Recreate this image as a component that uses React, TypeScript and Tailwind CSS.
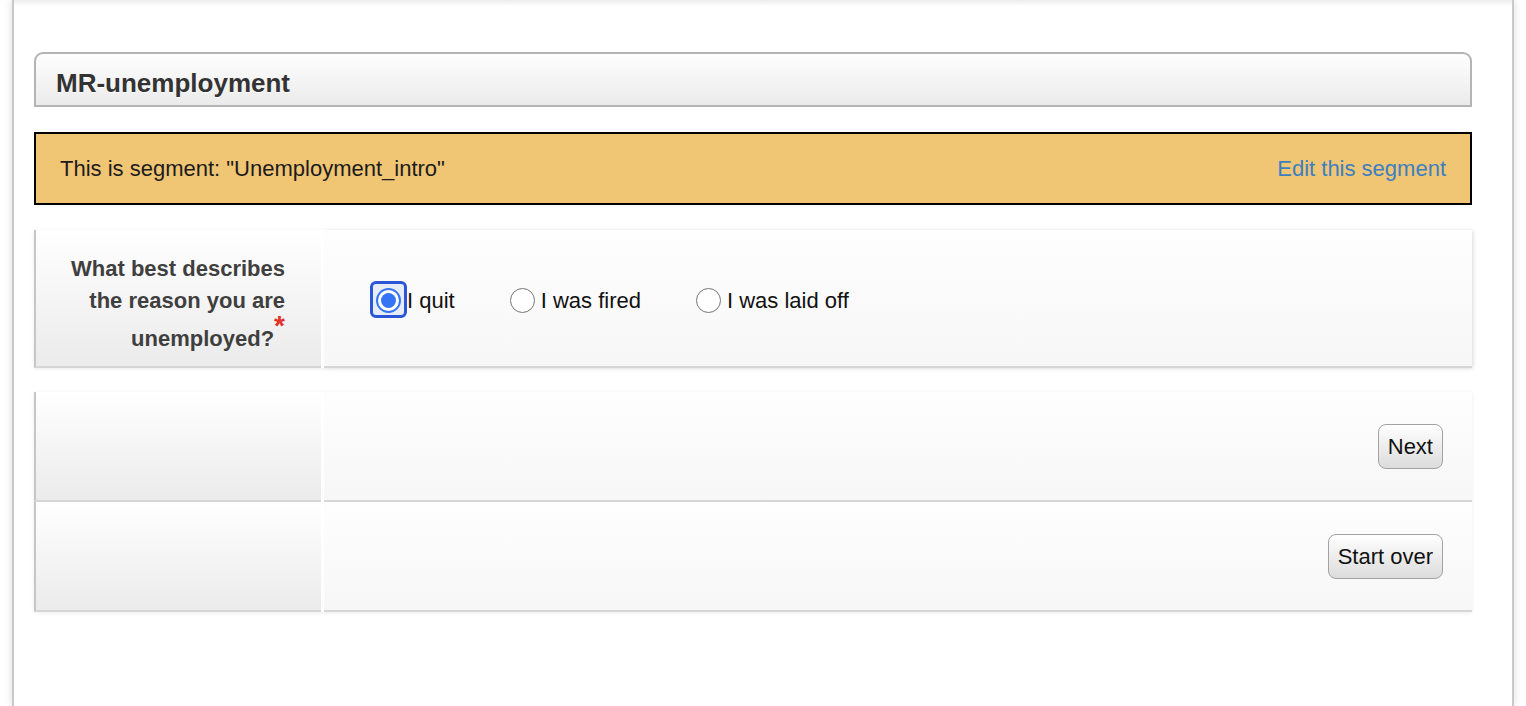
import React from 'react';

const options = ['I quit', 'I was fired', 'I was laid off'];

function Radio({ checked, focused }: { checked?: boolean; focused?: boolean }) {
  return (
    <span className="relative inline-flex w-[25px] h-[25px] shrink-0">
      {focused && (
        <span className="absolute -left-[6px] -top-[7px] w-[37px] h-[37px] rounded-[6px] border-[3px] border-[#2b56d6] bg-[#e8ecf6]" />
      )}
      {checked ? (
        <span className="relative flex items-center justify-center w-[25px] h-[25px] rounded-full border-2 border-[#3574f5] bg-white">
          <span className="w-[15px] h-[15px] rounded-full bg-[#3574f5]" />
        </span>
      ) : (
        <span className="relative w-[25px] h-[25px] rounded-full border-[1.5px] border-[#767676] bg-white" />
      )}
    </span>
  );
}

function Button({ children }: { children: React.ReactNode }) {
  return (
    <button className="h-[45px] px-[9px] pt-[1px] rounded-[8px] border-[1.5px] border-[#a2a2a2] bg-gradient-to-b from-white to-[#dcdcdc] text-[22px] text-[#111] leading-none">
      {children}
    </button>
  );
}

function ActionRow({ label }: { label: string }) {
  return (
    <div className="flex gap-[3px] h-[110px]">
      <div className="w-[287px] border-l-2 border-b-2 border-l-[#c6c6c6] border-b-[#d6d6d6] bg-gradient-to-b from-white to-[#ebebeb]" />
      <div className="flex-1 flex items-center justify-end pr-[29px] pt-[1px] border-b-2 border-[#d6d6d6] bg-gradient-to-b from-[#fefefe] to-[#f7f7f7]">
        <Button>{label}</Button>
      </div>
    </div>
  );
}

export default function App() {
  return (
    <div className="w-[1526px] h-[706px] overflow-hidden bg-white font-['Liberation_Sans',Arial,sans-serif]">
      <div className="ml-[12px] w-[1502px] h-full border-x-2 border-[#c9c9c9] bg-white shadow-[0_0_8px_rgba(0,0,0,0.15)]">
        <div className="h-[6px] bg-gradient-to-b from-[#ededed] to-white" />
        <div className="pl-[20px] pr-[40px] pt-[46px]">
          {/* page title */}
          <div className="h-[55px] flex items-center pl-[20px] border-2 border-[#b4b4b4] rounded-t-[9px] bg-gradient-to-b from-[#fefefe] to-[#ebebeb]">
            <h1 className="text-[26px] font-bold text-[#333] [text-shadow:0_1px_0_#fff] mt-[7px]">MR-unemployment</h1>
          </div>

          {/* segment notice */}
          <div className="mt-[25px] h-[73px] flex items-center justify-between px-[24px] border-2 border-black bg-[#f0c574] text-[22px]">
            <span className="text-[#1c1c1c]">This is segment: "Unemployment_intro"</span>
            <a className="text-[#3d7fc1]">Edit this segment</a>
          </div>

          {/* question */}
          <div className="mt-[25px] flex gap-[3px] h-[138px] shadow-[0_1px_4px_rgba(0,0,0,0.08)]">
            <div className="w-[287px] pt-[23px] pr-[36px] text-right text-[22px] font-bold text-[#3f3f3f] border-l-2 border-b-2 border-l-[#c6c6c6] border-b-[#d6d6d6] bg-gradient-to-b from-white to-[#ebebeb]">
              <span className="block leading-[32px]">What best describes</span>
              <span className="block leading-[32px]">the reason you are</span>
              <span className="block leading-[32px] mt-[6px]">
                unemployed?<span className="relative -top-[11px] text-[#e0342a] text-[28px] leading-none">*</span>
              </span>
            </div>
            <div className="flex-1 flex items-center pl-[52px] pt-[4px] border-b-2 border-[#d6d6d6] bg-gradient-to-b from-[#fefefe] to-[#f7f7f7] shadow-[2px_0_4px_rgba(0,0,0,0.08)]">
              <div className="flex items-center gap-[55px] text-[22px] text-[#111]">
                {options.map((o, i) => (
                  <label key={o} className="flex items-center gap-[6px]">
                    <Radio checked={i === 0} focused={i === 0} />
                    <span>{o}</span>
                  </label>
                ))}
              </div>
            </div>
          </div>

          {/* actions */}
          <div className="mt-[24px] shadow-[0_1px_4px_rgba(0,0,0,0.08)]">
            <ActionRow label="Next" />
            <ActionRow label="Start over" />
          </div>
        </div>
      </div>
    </div>
  );
}
